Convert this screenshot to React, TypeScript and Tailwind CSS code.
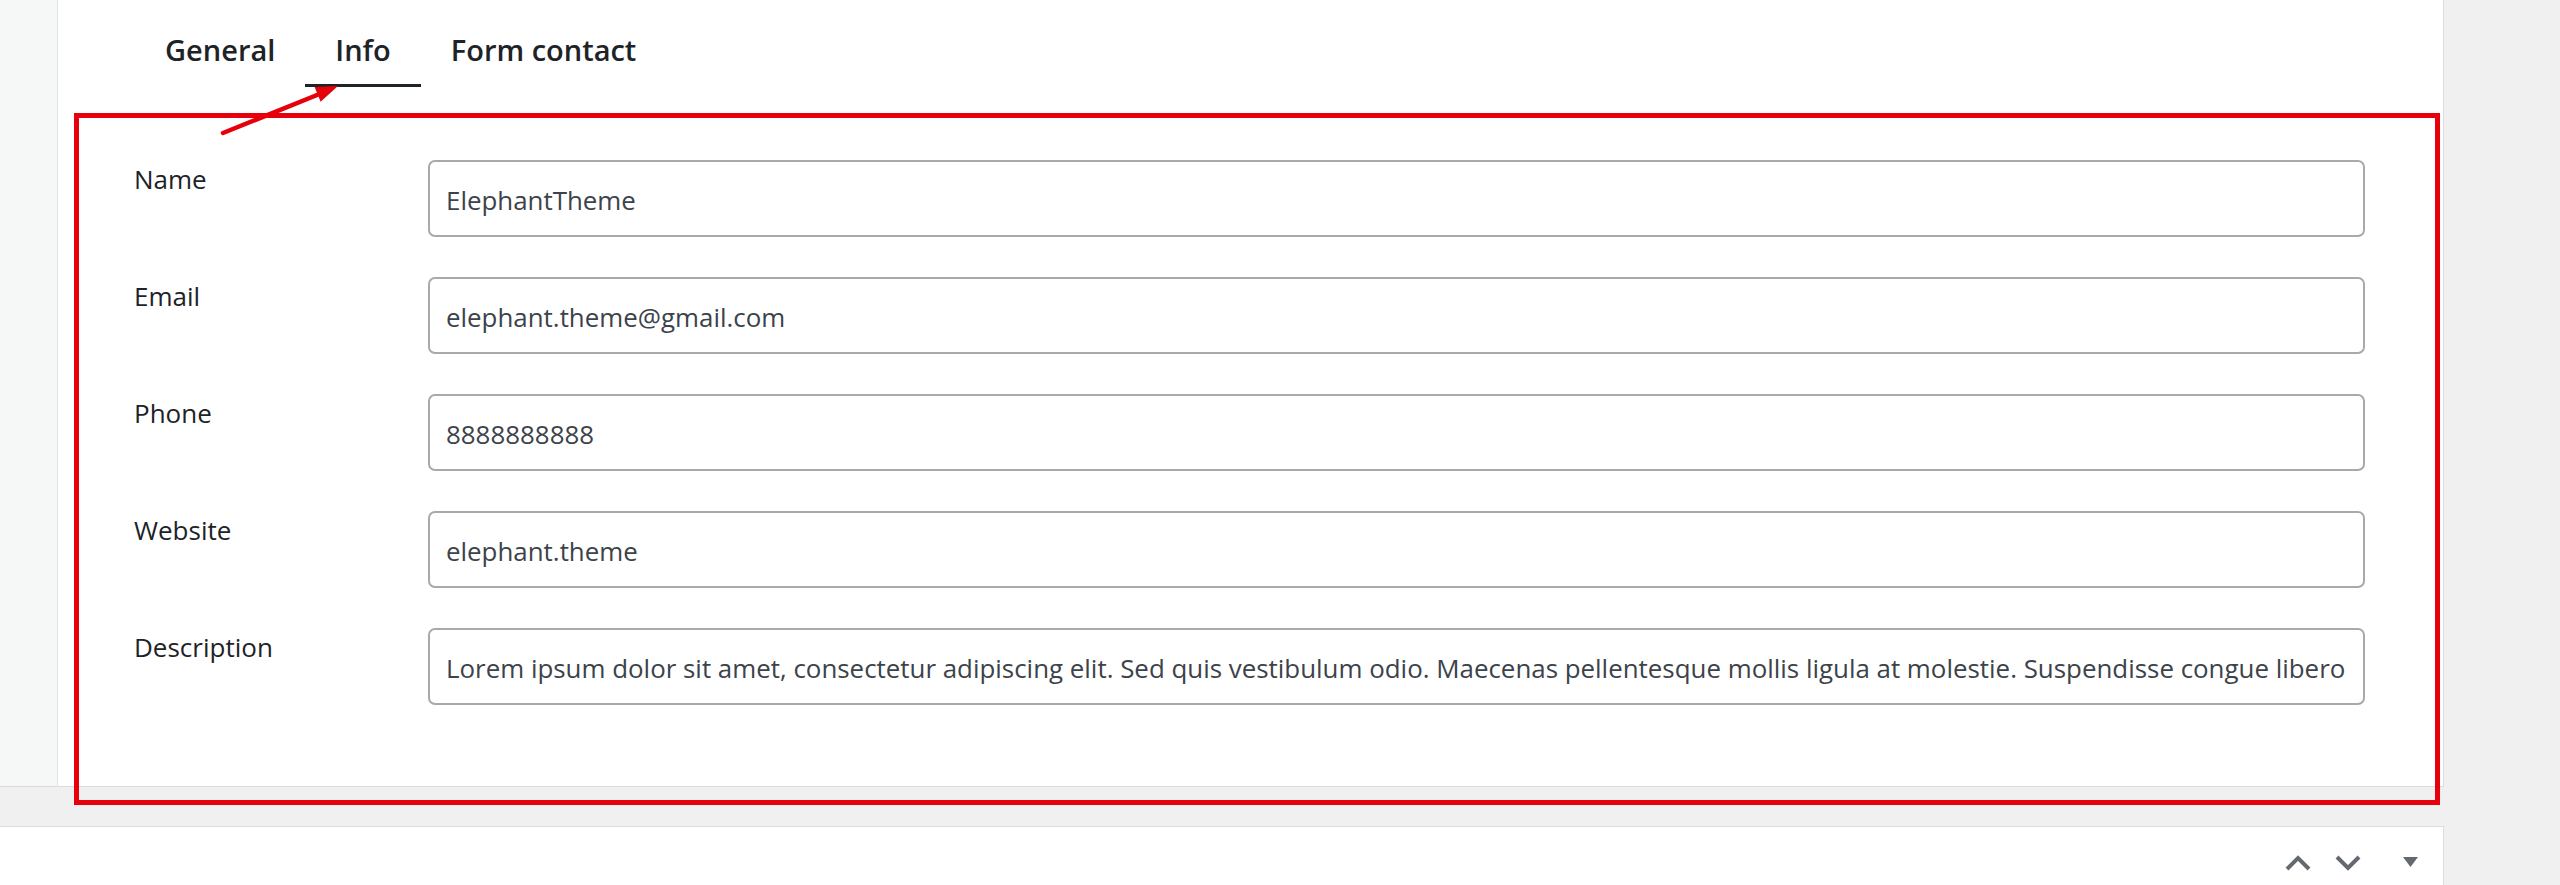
import React from 'react';

const fields = [
    { label: 'Name', value: 'ElephantTheme' },
    { label: 'Email', value: 'elephant.theme@gmail.com' },
    { label: 'Phone', value: '8888888888' },
    { label: 'Website', value: 'elephant.theme' },
    {
        label: 'Description',
        value: 'Lorem ipsum dolor sit amet, consectetur adipiscing elit. Sed quis vestibulum odio. Maecenas pellentesque mollis ligula at molestie. Suspendisse congue libero',
    },
];

const tabs = ['General', 'Info', 'Form contact'];

export default function App() {
    const active = 'Info';

    return (
        <div className="relative h-[885px] w-[2560px] overflow-hidden bg-[#f0f0f1] font-['Open_Sans','Noto_Sans',sans-serif]">
            {/* Settings panel */}
            <div className="flex w-[2444px] border-r border-b border-[#dcdcde] bg-white">
                <div className="w-[58px] shrink-0 border-r border-[#e4e4e6] bg-[#f6f7f7]" />
                <div className="flex flex-1 flex-col">
                    <div className="flex pl-[77px]">
                        {tabs.map((tab) => (
                            <div
                                key={tab}
                                className={`border-b-[3px] px-[30px] pt-[30px] pb-[14px] text-[29px] leading-[40px] font-semibold text-[#1d2327] ${tab === active ? 'border-[#1d2327]' : 'border-transparent'}`}
                            >
                                {tab}
                            </div>
                        ))}
                    </div>

                    <div className="flex flex-col gap-[40px] pt-[73px] pr-[78px] pb-[81px] pl-[76px]">
                        {fields.map((field) => (
                            <div key={field.label} className="flex items-start">
                                <label className="w-[294px] shrink-0 pt-[1px] text-[26px] leading-[36px] text-[#1d2327]">
                                    {field.label}
                                </label>
                                <input
                                    type="text"
                                    readOnly
                                    value={field.value}
                                    className="h-[77px] min-w-0 flex-1 rounded-[7px] border-2 border-[#a7aaad] bg-white px-[16px] pt-[3px] text-[25.9px] text-[#3c434a] outline-none"
                                />
                            </div>
                        ))}
                    </div>
                </div>
            </div>

            {/* Next metabox header */}
            <div className="mt-[39px] flex h-[59px] w-[2444px] items-start justify-end border-t border-r border-[#dcdcde] bg-white pt-[28px] pr-[25px]">
                <svg width="26" height="16" viewBox="0 0 26 16" className="text-[#646970]">
                    <polyline points="2,14 13,3 24,14" fill="none" stroke="currentColor" strokeWidth="4" />
                </svg>
                <svg width="26" height="16" viewBox="0 0 26 16" className="ml-[24px] text-[#646970]">
                    <polyline points="2,2 13,13 24,2" fill="none" stroke="currentColor" strokeWidth="4" />
                </svg>
                <svg width="15" height="10" viewBox="0 0 15 10" className="mt-[2px] ml-[42px] text-[#646970]">
                    <polygon points="0,0 15,0 7.5,10" fill="currentColor" />
                </svg>
            </div>

            {/* Annotation: red frame + arrow */}
            <div className="pointer-events-none absolute top-[113px] left-[74px] h-[692px] w-[2366px] border-[5px] border-[#e5000c]" />
            <svg className="pointer-events-none absolute top-0 left-0" width="400" height="160" viewBox="0 0 400 160">
                <line x1="223" y1="133" x2="322" y2="93" stroke="#e5000c" strokeWidth="4.5" strokeLinecap="round" />
                <polygon points="338,86 314.6,86.9 320.6,101.7" fill="#e5000c" />
            </svg>
        </div>
    );
}
